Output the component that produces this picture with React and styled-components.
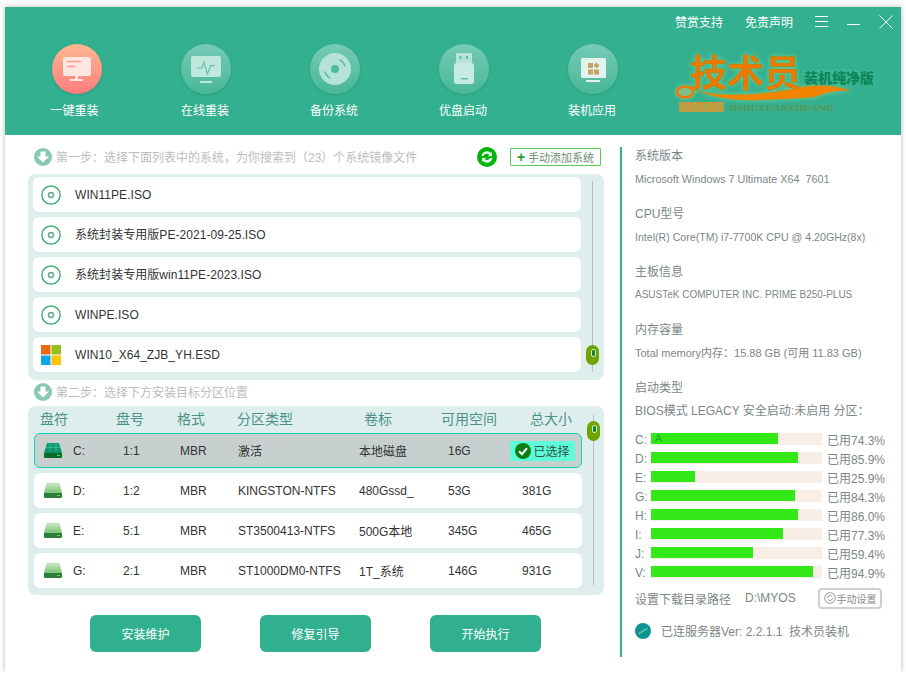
import React from 'react';
import styled, { createGlobalStyle } from 'styled-components';

const GlobalStyle = createGlobalStyle`
  html, body {
    margin: 0;
    padding: 0;
    background: #fff;
  }
  body {
    font-family: "Liberation Sans", "Noto Sans CJK SC", sans-serif;
    font-size: 12px;
  }
`;

const Window = styled.div`
  width: 896px;
  height: 665px;
  margin: 7px 0 0 5px;
  background: #fff;
  box-shadow: 0 0 5px rgba(0, 0, 0, 0.3);
`;

const Header = styled.header`
  height: 128px;
  background: #33b08f;
  color: #fff;
`;

const TopBar = styled.div`
  height: 28px;
  padding-right: 8px;
  display: flex;
  justify-content: flex-end;
  align-items: center;
`;

const TopLinks = styled.div`
  display: flex;
  gap: 23px;
  margin-right: 23px;
`;

const TopLink = styled.span`
  width: 47px;
  white-space: nowrap;
  cursor: pointer;
`;

const WindowButtons = styled.div`
  display: flex;
  gap: 19px;
  align-items: center;
`;

const NavRow = styled.nav`
  display: flex;
  padding: 9px 0 0 7px;
`;

const NavItem = styled.div`
  width: 129px;
  display: flex;
  flex-direction: column;
  align-items: center;
  gap: 9px;
  cursor: pointer;
`;

const NavCircle = styled.div`
  width: 50px;
  height: 50px;
  border-radius: 50%;
  background: ${(p) => (p.$active
    ? 'linear-gradient(#ffb890, #ff7c7e)'
    : 'linear-gradient(#76cbb6, #49b797)')};
  box-shadow: 0 1px 3px rgba(0, 80, 60, 0.2);
`;

const NavLabel = styled.span`
  line-height: 16px;
  white-space: nowrap;
  margin-right: ${(p) => (p.$active ? '4px' : '1px')};
`;

const Logo = styled.svg`
  flex: none;
  width: 220px;
  height: 76px;
  margin: -3px 0 0 8px;
`;

const Main = styled.div`
  display: flex;
`;

const LeftColumn = styled.section`
  width: 576px;
  margin-left: 23px;
`;

const StepRow = styled.div`
  height: 20px;
  display: flex;
  align-items: center;
  padding: 0 3px 0 6px;
  color: #bcbcbc;
  margin: ${(p) => (p.$second ? '2px 0 4px' : '12px 0 7px')};
`;

const StepText = styled.span`
  margin-left: 4px;
  padding-bottom: 2px;
  white-space: nowrap;
`;

const RefreshIcon = styled.svg`
  margin-left: auto;
  flex: none;
`;

const AddButton = styled.button`
  width: 91px;
  height: 18px;
  margin-left: 13px;
  padding: 0;
  background: #fff;
  border: 1px solid #5ccb55;
  border-radius: 1px;
  font: inherit;
  font-size: 11px;
  color: #6d8c74;
  display: flex;
  align-items: center;
  justify-content: center;
  gap: 3px;
  cursor: pointer;
`;

const Plus = styled.b`
  color: #1fa52a;
  font-size: 14px;
  line-height: 14px;
`;

const Panel = styled.div`
  position: relative;
  background: #deeeed;
  border-radius: 8px;
`;

const ImagePanel = styled(Panel)`
  height: 206px;
  padding: 3px 0 0 5px;
  box-sizing: border-box;
  display: flex;
  flex-direction: column;
  gap: 5px;
`;

const TablePanel = styled(Panel)`
  height: 189px;
  padding-left: 6px;
  box-sizing: border-box;
`;

const ImageRow = styled.div`
  width: 548px;
  height: 35px;
  background: #fff;
  border-radius: 6px;
  display: flex;
  align-items: center;
  gap: 14px;
  padding-left: 8px;
  box-sizing: border-box;
  color: #333;
  white-space: nowrap;
`;

const ImageName = styled.span`
  line-height: 14px;
  letter-spacing: 0.05px;
`;

const TrackLine = styled.div`
  position: absolute;
  width: 1px;
  background: #b9bfbe;
  left: ${(p) => p.$left}px;
  top: ${(p) => p.$top}px;
  height: ${(p) => p.$height}px;
`;

const Thumb = styled.div`
  position: absolute;
  width: 13px;
  height: 20px;
  border-radius: 7px;
  background: #6fa300;
  left: ${(p) => p.$left}px;
  top: ${(p) => p.$top}px;
  &::after {
    content: '';
    position: absolute;
    left: 5px;
    top: 4px;
    width: 3px;
    height: 6px;
    background: #0a8a2a;
    border: 1px solid #dfe8d0;
    border-radius: 2px;
  }
`;

const TableHead = styled.div`
  height: 27px;
  padding: 0 0 3px 6px;
  box-sizing: border-box;
  display: grid;
  grid-template-columns: 76px 61px 60px 127px 77px 89px 60px;
  align-items: center;
  font-size: 14px;
  color: #4a9188;
  white-space: nowrap;
`;

const TableRows = styled.div`
  display: flex;
  flex-direction: column;
  gap: 5px;
`;

const DiskRow = styled.div`
  width: 548px;
  height: 35px;
  box-sizing: border-box;
  display: grid;
  grid-template-columns: 29px 50px 57px 58px 121px 89px 62px 65px;
  align-items: center;
  padding-left: ${(p) => (p.$selected ? '9px' : '10px')};
  background: ${(p) => (p.$selected ? '#c7d0cf' : '#fff')};
  border: ${(p) => (p.$selected ? '1px solid #0fd6bb' : 'none')};
  border-radius: 6px;
  color: #333;
  white-space: nowrap;
`;

const TotalCell = styled.span`
  padding-left: 12px;
`;

const SelectedBadge = styled.span`
  width: 65px;
  height: 20px;
  background: #5cffd9;
  display: flex;
  align-items: center;
  justify-content: center;
  gap: 2px;
  color: #2f4f4a;
`;

const ButtonRow = styled.div`
  display: flex;
  gap: 59px;
  margin: 20px 0 0 62px;
`;

const ActionButton = styled.button`
  width: 111px;
  height: 37px;
  border: none;
  border-radius: 6px;
  background: #31b08f;
  color: #fff;
  font: inherit;
  cursor: pointer;
`;

const RightColumn = styled.aside`
  width: 250px;
  height: 510px;
  margin: 12px 0 0 16px;
  padding-left: 13px;
  border-left: 2px solid #33b08f;
  color: #7c8686;
`;

const InfoGroup = styled.div`
  display: flex;
  flex-direction: column;
  gap: 7px;
  margin-bottom: 18px;
  white-space: pre;
`;

const InfoLabel = styled.div`
  line-height: 16px;
  padding-top: 1px;
`;

const InfoValue = styled.div`
  line-height: 16px;
  font-size: ${(p) => p.$size}px;
`;

const Bars = styled.div`
  margin-top: -8px;
`;

const BarRow = styled.div`
  height: 19px;
  display: flex;
  align-items: center;
  white-space: nowrap;
`;

const BarLetter = styled.span`
  width: 16px;
  padding-top: 2px;
`;

const BarTrack = styled.div`
  width: 171px;
  height: 12px;
  background: #f8eee6;
  margin-right: 5px;
`;

const BarFill = styled.div`
  height: 11px;
  background: #33e817;
  color: #18a83a;
  font-size: 10px;
  line-height: 11px;
  padding-left: 4px;
  box-sizing: border-box;
`;

const BarText = styled.span`
  padding-top: 2px;
`;

const DownloadRow = styled.div`
  display: flex;
  align-items: center;
  height: 22px;
  margin-top: 6px;
  white-space: nowrap;
`;

const DownloadPath = styled.span`
  margin-left: 14px;
  width: 73px;
`;

const SetButton = styled.button`
  width: 64px;
  height: 21px;
  padding: 0;
  background: #fff;
  border: 2px solid #cfcfcf;
  border-radius: 4px;
  font: inherit;
  font-size: 10px;
  color: #8b8b8b;
  display: flex;
  align-items: center;
  justify-content: center;
  gap: 1px;
  cursor: pointer;
`;

const ServerRow = styled.div`
  display: flex;
  align-items: center;
  gap: 10px;
  margin-top: 13px;
  white-space: nowrap;
`;

const images = [
  { name: 'WIN11PE.ISO', icon: 'disc' },
  { name: '系统封装专用版PE-2021-09-25.ISO', icon: 'disc' },
  { name: '系统封装专用版win11PE-2023.ISO', icon: 'disc' },
  { name: 'WINPE.ISO', icon: 'disc' },
  { name: 'WIN10_X64_ZJB_YH.ESD', icon: 'win' },
];

const heads = ['盘符', '盘号', '格式', '分区类型', '卷标', '可用空间', '总大小'];

const disks = [
  { id: 'C:', no: '1:1', fmt: 'MBR', type: '激活', label: '本地磁盘', free: '16G', selected: true },
  { id: 'D:', no: '1:2', fmt: 'MBR', type: 'KINGSTON-NTFS', label: '480Gssd_', free: '53G', total: '381G' },
  { id: 'E:', no: '5:1', fmt: 'MBR', type: 'ST3500413-NTFS', label: '500G本地', free: '345G', total: '465G' },
  { id: 'G:', no: '2:1', fmt: 'MBR', type: 'ST1000DM0-NTFS', label: '1T_系统', free: '146G', total: '931G' },
];

const info = [
  ['系统版本', 'Microsoft Windows 7 Ultimate X64  7601', 10.8],
  ['CPU型号', 'Intel(R) Core(TM) i7-7700K CPU @ 4.20GHz(8x)', 10.6],
  ['主板信息', 'ASUSTeK COMPUTER INC. PRIME B250-PLUS', 10],
  ['内存容量', 'Total memory内存：15.88 GB (可用 11.83 GB)', 11],
];

const usage = [
  ['C:', 74.3], ['D:', 85.9], ['E:', 25.9], ['G:', 84.3],
  ['H:', 86.0], ['I:', 77.3], ['J:', 59.4], ['V:', 94.9],
];

const MenuIcon = () => (
  <svg width="13" height="11" viewBox="0 0 13 11" stroke="#fff" fill="none">
    <path d="M0 .5h13M0 5.5h13M0 10.5h13" />
  </svg>
);

const MinIcon = () => (
  <svg width="13" height="14" viewBox="0 0 13 14" stroke="#fff" fill="none">
    <path d="M0 10.5h13" />
  </svg>
);

const CloseIcon = () => (
  <svg width="14" height="15" viewBox="0 0 14 15" stroke="#fff" fill="none">
    <path d="M.5 1.500l13 13M13.500 1.500l-13 13" />
  </svg>
);

const InstallIcon = () => (
  <svg width="50" height="50" viewBox="0 0 50 50">
    <rect x="11" y="13" width="28" height="19" rx="2" fill="#ffe6e0" />
    <path d="M23 32h3v3h-3z" fill="#ffe6e0" />
    <rect x="18" y="35" width="13" height="2" fill="#ffe6e0" />
    <path d="M15 17.500h14M15 22.500h8" stroke="#ff9d8a" strokeWidth="1.500" />
  </svg>
);

const OnlineIcon = () => (
  <svg width="50" height="50" viewBox="0 0 50 50">
    <rect x="10" y="12" width="30" height="21" rx="2" fill="#bfe8dc" />
    <rect x="19" y="37" width="12" height="2" fill="#bfe8dc" />
    <path d="M15.700 24h5l2.300-5.700 3.300 11.700 3.400-8.300H34" fill="none" stroke="#5fc4a8" strokeWidth="1.200" />
  </svg>
);

const BackupIcon = () => (
  <svg width="50" height="50" viewBox="0 0 50 50">
    <circle cx="25" cy="25" r="16" fill="#b5e3d6" />
    <circle cx="25" cy="25" r="4" fill="#4fb99c" />
    <path d="M15 28a10 10 0 0 0 5 6M35 22a10 10 0 0 0-5-6" fill="none" stroke="#5cc0a5" strokeWidth="1.500" strokeLinecap="round" />
  </svg>
);

const UsbIcon = () => (
  <svg width="50" height="50" viewBox="0 0 50 50">
    <path d="M18 9h14a1 1 0 0 1 1 1v9H17v-9a1 1 0 0 1 1-1z" fill="#b8e5d9" />
    <rect x="15" y="19" width="20" height="21" rx="3" fill="#c6ebe1" />
    <rect x="20.500" y="12" width="2" height="3" fill="#5fc0a6" />
    <rect x="27" y="12" width="2" height="3" fill="#5fc0a6" />
    <rect x="22" y="34" width="7" height="1.500" fill="#5fc0a6" />
  </svg>
);

const AppsIcon = () => (
  <svg width="50" height="50" viewBox="0 0 50 50">
    <rect x="13" y="14" width="25" height="20" rx="1.500" fill="#e2f3ee" />
    <rect x="18" y="36" width="14" height="2" fill="#e2f3ee" />
    <rect x="20" y="19" width="5" height="5" fill="#c9a068" />
    <path d="M28.500 18.500l3 3-3 3-3-3z" fill="#c9a068" />
    <rect x="20" y="25.500" width="5" height="5" fill="#c9a068" />
    <rect x="26" y="25.500" width="5" height="5" fill="#c9a068" />
  </svg>
);

const navItems = [
  { label: '一键重装', Icon: InstallIcon, active: true },
  { label: '在线重装', Icon: OnlineIcon },
  { label: '备份系统', Icon: BackupIcon },
  { label: '优盘启动', Icon: UsbIcon },
  { label: '装机应用', Icon: AppsIcon },
];

const DownArrow = () => (
  <svg width="18" height="18" viewBox="0 0 18 18">
    <circle cx="9" cy="9" r="9" fill="#84c9b0" />
    <path d="M6.500 3.500h5v5H15l-6 6-6-6h3.500z" fill="#fff" />
  </svg>
);

const Refresh = () => (
  <RefreshIcon width="20" height="20" viewBox="0 0 20 20">
    <circle cx="10" cy="10" r="10" fill="#00b40c" />
    <path d="M4.500 9a5.500 5.500 0 0 1 9.500-3l1-1v4.200h-4.200l1.500-1.500A3.500 3.500 0 0 0 6.500 9z" fill="#e4f7e6" />
    <path d="M15.500 11a5.500 5.500 0 0 1-9.500 3l-1 1v-4.200h4.200l-1.500 1.500a3.500 3.500 0 0 0 5.300-1.300z" fill="#e4f7e6" />
  </RefreshIcon>
);

const Disc = () => (
  <svg width="20" height="20" viewBox="0 0 20 20" fill="none" stroke="#2fa866">
    <circle cx="10" cy="10" r="9.200" strokeWidth="1.300" />
    <circle cx="10" cy="10" r="2.500" strokeWidth="1.500" stroke="#62a98a" />
  </svg>
);

const WinLogo = () => (
  <svg width="20" height="20" viewBox="0 0 20 20">
    <rect width="9.500" height="9.500" fill="#f0680e" />
    <rect x="10.500" width="9.500" height="9.500" fill="#92c01c" />
    <rect y="10.500" width="9.500" height="9.500" fill="#0ea5ef" />
    <rect x="10.500" y="10.500" width="9.500" height="9.500" fill="#ffc400" />
  </svg>
);

const DiskIcon = ({ selected }) => {
  const top = selected ? 'url(#diskTopOn)' : 'url(#diskTopOff)';
  return (
    <svg width="18" height="15" viewBox="0 0 18 15">
      <defs>
        <linearGradient id="diskTopOn" x1="0" y1="0" x2="0" y2="1">
          <stop offset="0" stopColor="#0fa27c" />
          <stop offset="1" stopColor="#0d8f5e" />
        </linearGradient>
        <linearGradient id="diskTopOff" x1="0" y1="0" x2="0" y2="1">
          <stop offset="0" stopColor="#cfe8c8" />
          <stop offset="1" stopColor="#72c26f" />
        </linearGradient>
      </defs>
      <path d="M3 0h12l3 10H0z" fill={top} stroke={selected ? 'none' : '#bcc8bc'} strokeWidth=".5" />
      {selected && <path d="M6 1v8M12 1v8M2 4.500h14" stroke="#3fc7a5" strokeWidth=".6" />}
      <path d="M0 10h18v4a1 1 0 0 1-1 1H1a1 1 0 0 1-1-1z" fill={selected ? '#076f2b' : '#2f7f38'} />
      <rect x="13" y="12" width="3" height="1" fill="#3ee05a" />
    </svg>
  );
};

const CheckBadgeIcon = () => (
  <svg width="16" height="16" viewBox="0 0 16 16">
    <circle cx="8" cy="8" r="8" fill="#0a7d14" />
    <path d="M4 8.200l3 3 5-6" fill="none" stroke="#fff" strokeWidth="2" />
  </svg>
);

const SetIcon = () => (
  <svg width="12" height="12" viewBox="0 0 12 12" fill="none" stroke="#9a9a9a">
    <circle cx="6" cy="6" r="5.300" />
    <path d="M3.500 6a2.500 2.500 0 0 1 4.500-1.500M8.500 6A2.500 2.500 0 0 1 4 7.500" />
  </svg>
);

const LinkBadge = () => (
  <svg width="16" height="16" viewBox="0 0 16 16">
    <circle cx="8" cy="8" r="8" fill="#0b9490" />
    <path d="M4 10.500l2-1.500M10 7l2-1.500M6.500 9.500l3-3" stroke="#58c8b0" strokeWidth="1.500" strokeLinecap="round" />
  </svg>
);

const BrandLogo = () => (
  <Logo viewBox="0 0 220 76">
    <defs>
      <filter id="logoGlow" x="-10%" y="-20%" width="120%" height="140%">
        <feGaussianBlur in="SourceAlpha" stdDeviation="2" result="blur" />
        <feFlood floodColor="#b8f0a8" floodOpacity="0.5" />
        <feComposite in2="blur" operator="in" />
        <feMerge>
          <feMergeNode />
          <feMergeNode in="SourceGraphic" />
        </feMerge>
      </filter>
    </defs>
    <g filter="url(#logoGlow)">
      <text
        x="25" y="46" fontFamily="'Noto Sans CJK SC', sans-serif" fontSize="37" fontWeight="700"
        fill="#f07800" stroke="#5f9f20" strokeWidth=".5" textLength="111" lengthAdjust="spacingAndGlyphs"
      >
        技术员
      </text>
      <path
        d="M31 49C50 56 100 55 136 46C155 43 175 45 186 50C172 49 160 52 150 56C130 58 115 58 96 59C75 60 50 58 31 49z"
        fill="#f28400" stroke="#6d9f20" strokeWidth=".4"
      />
      <ellipse cx="20" cy="51" rx="8" ry="5.500" fill="#7fc08a" stroke="#f07800" strokeWidth="2.500" />
    </g>
    <rect x="138" y="29" width="72" height="15" fill="#38b892" />
    <text x="139" y="42" fontFamily="'Noto Sans CJK SC', sans-serif" fontSize="14" fontWeight="900" fill="#0f855a" textLength="70" lengthAdjust="spacingAndGlyphs">
      装机纯净版
    </text>
    <g fontFamily="'Liberation Serif', serif" fontWeight="700">
      <rect x="14" y="61" width="45" height="10" fill="#c59a3e" />
      <text x="15" y="70" fontSize="11" fill="#9aae55" textLength="43">JSYZ</text>
      <text x="63" y="70" fontSize="9" fill="#5f9450" textLength="106" lengthAdjust="spacingAndGlyphs">JISHUYUANZHUANG</text>
    </g>
  </Logo>
);

const App = () => (
  <>
    <GlobalStyle />
    <Window>
      <Header>
        <TopBar>
          <TopLinks>
            <TopLink>赞赏支持</TopLink>
            <TopLink>免责声明</TopLink>
          </TopLinks>
          <WindowButtons>
            <MenuIcon />
            <MinIcon />
            <CloseIcon />
          </WindowButtons>
        </TopBar>
        <NavRow>
          {navItems.map(({ label, Icon, active }) => (
            <NavItem key={label}>
              <NavCircle $active={active}><Icon /></NavCircle>
              <NavLabel $active={active}>{label}</NavLabel>
            </NavItem>
          ))}
          <BrandLogo />
        </NavRow>
      </Header>
      <Main>
        <LeftColumn>
          <StepRow>
            <DownArrow />
            <StepText>第一步：选择下面列表中的系统，为你搜索到（23）个系统镜像文件</StepText>
            <Refresh />
            <AddButton><Plus>+</Plus>手动添加系统</AddButton>
          </StepRow>
          <ImagePanel>
            {images.map((img) => (
              <ImageRow key={img.name}>
                {img.icon === 'win' ? <WinLogo /> : <Disc />}
                <ImageName>{img.name}</ImageName>
              </ImageRow>
            ))}
            <TrackLine $left={564} $top={7} $height={191} />
            <Thumb $left={558} $top={171} />
          </ImagePanel>
          <StepRow $second>
            <DownArrow />
            <StepText>第二步：选择下方安装目标分区位置</StepText>
          </StepRow>
          <TablePanel>
            <TableHead>
              {heads.map((h) => <span key={h}>{h}</span>)}
            </TableHead>
            <TableRows>
              {disks.map((d) => (
                <DiskRow key={d.id} $selected={d.selected}>
                  <DiskIcon selected={d.selected} />
                  <span>{d.id}</span>
                  <span>{d.no}</span>
                  <span>{d.fmt}</span>
                  <span>{d.type}</span>
                  <span>{d.label}</span>
                  <span>{d.free}</span>
                  {d.selected
                    ? <SelectedBadge><CheckBadgeIcon />已选择</SelectedBadge>
                    : <TotalCell>{d.total}</TotalCell>}
                </DiskRow>
              ))}
            </TableRows>
            <TrackLine $left={565} $top={9} $height={170} />
            <Thumb $left={559} $top={15} />
          </TablePanel>
          <ButtonRow>
            <ActionButton>安装维护</ActionButton>
            <ActionButton>修复引导</ActionButton>
            <ActionButton>开始执行</ActionButton>
          </ButtonRow>
        </LeftColumn>
        <RightColumn>
          {info.map(([label, value, size]) => (
            <InfoGroup key={label}>
              <InfoLabel>{label}</InfoLabel>
              <InfoValue $size={size}>{value}</InfoValue>
            </InfoGroup>
          ))}
          <InfoGroup>
            <InfoLabel>启动类型</InfoLabel>
            <InfoValue $size={12}>BIOS模式 LEGACY 安全启动:未启用 分区：</InfoValue>
          </InfoGroup>
          <Bars>
            {usage.map(([letter, pct]) => (
              <BarRow key={letter}>
                <BarLetter>{letter}</BarLetter>
                <BarTrack>
                  <BarFill style={{ width: `${pct}%` }}>{letter === 'C:' ? 'A' : ''}</BarFill>
                </BarTrack>
                <BarText>已用{pct.toFixed(1)}%</BarText>
              </BarRow>
            ))}
          </Bars>
          <DownloadRow>
            设置下载目录路径
            <DownloadPath>D:\MYOS</DownloadPath>
            <SetButton><SetIcon />手动设置</SetButton>
          </DownloadRow>
          <ServerRow>
            <LinkBadge />
            已连服务器Ver: 2.2.1.1&nbsp;&nbsp;技术员装机
          </ServerRow>
        </RightColumn>
      </Main>
    </Window>
  </>
);

export default App;
